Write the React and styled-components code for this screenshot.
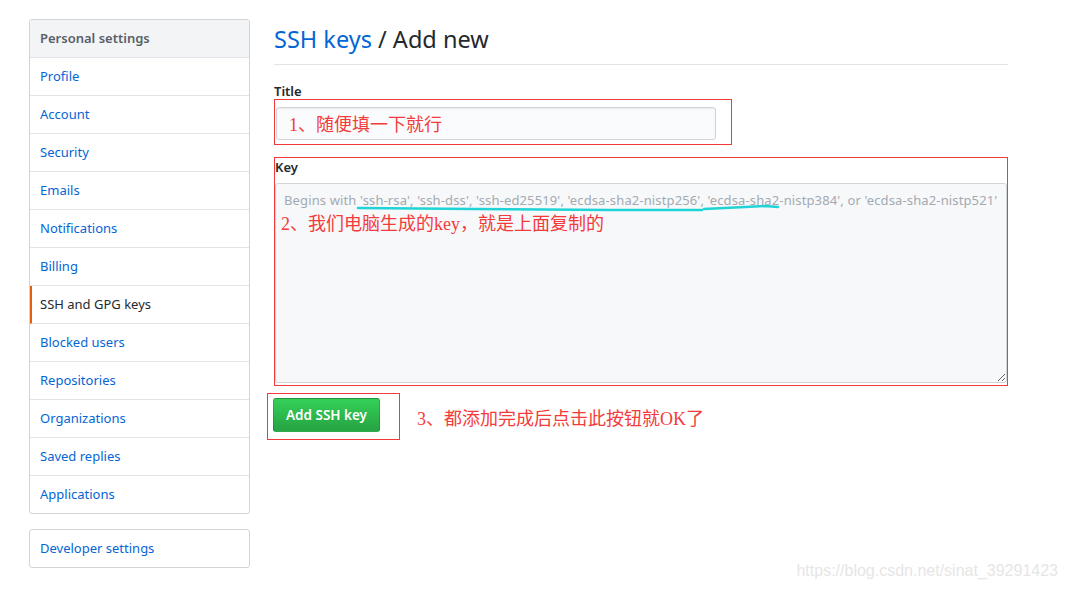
import React from 'react';
import styled, { createGlobalStyle } from 'styled-components';

const GlobalStyle = createGlobalStyle`
  body {
    margin: 0;
    background: #fff;
    font-family: "Noto Sans", "Liberation Sans", sans-serif;
    color: #24292e;
  }
`;

const Page = styled.div`
  position: relative;
  display: flex;
  align-items: flex-start;
  gap: 24px;
  padding: 19px 0 0 29px;
  width: 1069px;
  height: 589px;
  box-sizing: border-box;
`;

const Sidebar = styled.div`
  width: 221px;
  display: flex;
  flex-direction: column;
  gap: 15px;
`;

const Menu = styled.nav`
  border: 1px solid #d1d5da;
  border-radius: 3px;
  overflow: hidden;
`;

const MenuHeading = styled.div`
  height: 37px;
  line-height: 37px;
  padding-left: 10px;
  background: #f3f4f6;
  border-bottom: 1px solid #e1e4e8;
  font-size: 13px;
  font-weight: 600;
  color: #586069;
`;

const MenuItem = styled.a`
  display: block;
  height: 37px;
  line-height: 37px;
  padding-left: ${(p) => (p.active ? '8px' : '10px')};
  border-left: ${(p) => (p.active ? '2px solid #e36209' : 'none')};
  border-bottom: 1px solid #e1e4e8;
  font-size: 13px;
  color: ${(p) => (p.active ? '#24292e' : '#0366d6')};
  text-decoration: none;
  &:last-child {
    border-bottom: none;
  }
`;

const Main = styled.main`
  width: 734px;
`;

const Heading = styled.h2`
  margin: 0;
  padding: 5px 0 10px;
  border-bottom: 1px solid #e1e4e8;
  font-size: 23.5px;
  font-weight: 400;
  line-height: 30px;
  span {
    color: #0366d6;
  }
`;

const Label = styled.label`
  display: block;
  font-size: 13px;
  font-weight: 600;
  line-height: 16px;
`;

const TitleGroup = styled.div`
  margin-top: 18px;
`;

const RedBox = styled.div`
  position: relative;
  width: fit-content;
  border: 1px solid #f23a3a;
  padding: 7px 15px 4px 1px;
`;

const TitleInput = styled.div`
  width: 438px;
  height: 31px;
  border: 1px solid #d1d5da;
  border-radius: 3px;
  background: #fafbfc;
  box-shadow: inset 0 1px 2px rgba(27, 31, 35, 0.075);
`;

const Note = styled.span`
  position: absolute;
  font-family: "Liberation Serif", "Noto Sans CJK SC", serif;
  font-size: 18px;
  line-height: 20px;
  color: #f33b3b;
  white-space: nowrap;
`;

const KeyBox = styled.div`
  position: relative;
  margin-top: 12px;
  border: 1px solid #f23a3a;
  padding-top: 1px;
  padding-bottom: 2px;
`;

const KeyLabel = styled(Label)`
  margin-bottom: 8px;
`;

const KeyArea = styled.textarea`
  display: block;
  width: 732px;
  height: 200px;
  box-sizing: border-box;
  margin: 0;
  padding: 8px 8px;
  border: 1px solid #d1d5da;
  border-radius: 3px;
  background: #f7f8fa;
  font-family: "Noto Sans", sans-serif;
  font-size: 13px;
  letter-spacing: 0.13px;
  line-height: 17px;
  resize: vertical;
  &::placeholder {
    color: #a3aab1;
  }
`;

const Underline = styled.svg`
  position: absolute;
  left: 0;
  top: 0;
  pointer-events: none;
`;

const ActionRow = styled.div`
  display: flex;
  align-items: center;
  gap: 17px;
  margin-top: 7px;
  margin-left: -7px;
`;

const ButtonBox = styled.div`
  border: 1px solid #f23a3a;
  padding: 4px 19px 7px 5px;
`;

const Button = styled.button`
  display: block;
  height: 34px;
  padding: 0 12px;
  border: 1px solid rgba(27, 31, 35, 0.2);
  border-radius: 3px;
  background: linear-gradient(-180deg, #34d058 0%, #28a745 90%);
  color: #fff;
  font-family: "Noto Sans", sans-serif;
  font-size: 13.5px;
  font-weight: 600;
`;

const InlineNote = styled.span`
  font-family: "Liberation Serif", "Noto Sans CJK SC", serif;
  font-size: 18px;
  color: #f33b3b;
`;

const Watermark = styled.div`
  position: absolute;
  right: 11px;
  bottom: 9px;
  font-family: "Liberation Sans", sans-serif;
  font-size: 16px;
  color: #e6e6e6;
`;

const personal = [
  'Profile',
  'Account',
  'Security',
  'Emails',
  'Notifications',
  'Billing',
  'SSH and GPG keys',
  'Blocked users',
  'Repositories',
  'Organizations',
  'Saved replies',
  'Applications',
];

const App = () => (
  <>
    <GlobalStyle />
    <Page>
      <Sidebar>
        <Menu>
          <MenuHeading>Personal settings</MenuHeading>
          {personal.map((item) => (
            <MenuItem key={item} href="#" active={item === 'SSH and GPG keys' ? 1 : 0}>
              {item}
            </MenuItem>
          ))}
        </Menu>
        <Menu>
          <MenuItem href="#">Developer settings</MenuItem>
        </Menu>
      </Sidebar>
      <Main>
        <Heading>
          <span>SSH keys</span> / Add new
        </Heading>
        <TitleGroup>
          <Label>Title</Label>
          <RedBox>
            <TitleInput />
            <Note style={{ left: 14, top: 15 }}>1、随便填一下就行</Note>
          </RedBox>
        </TitleGroup>
        <KeyBox>
          <KeyLabel>Key</KeyLabel>
          <KeyArea placeholder="Begins with 'ssh-rsa', 'ssh-dss', 'ssh-ed25519', 'ecdsa-sha2-nistp256', 'ecdsa-sha2-nistp384', or 'ecdsa-sha2-nistp521'" />
          <Note style={{ left: 6, top: 56 }}>2、我们电脑生成的key，就是上面复制的</Note>
          <Underline width="734" height="80">
            <path
              d="M83 50 L200 51 L336 52 L427 52"
              fill="none"
              stroke="#1fd3d6"
              strokeWidth="2.5"
              strokeLinecap="round"
            />
            <path
              d="M429 51 L470 49 L490 48 L503 49"
              fill="none"
              stroke="#1fd3d6"
              strokeWidth="2.5"
              strokeLinecap="round"
            />
          </Underline>
        </KeyBox>
        <ActionRow>
          <ButtonBox>
            <Button type="button">Add SSH key</Button>
          </ButtonBox>
          <InlineNote>3、都添加完成后点击此按钮就OK了</InlineNote>
        </ActionRow>
      </Main>
      <Watermark>https://blog.csdn.net/sinat_39291423</Watermark>
    </Page>
  </>
);

export default App;
